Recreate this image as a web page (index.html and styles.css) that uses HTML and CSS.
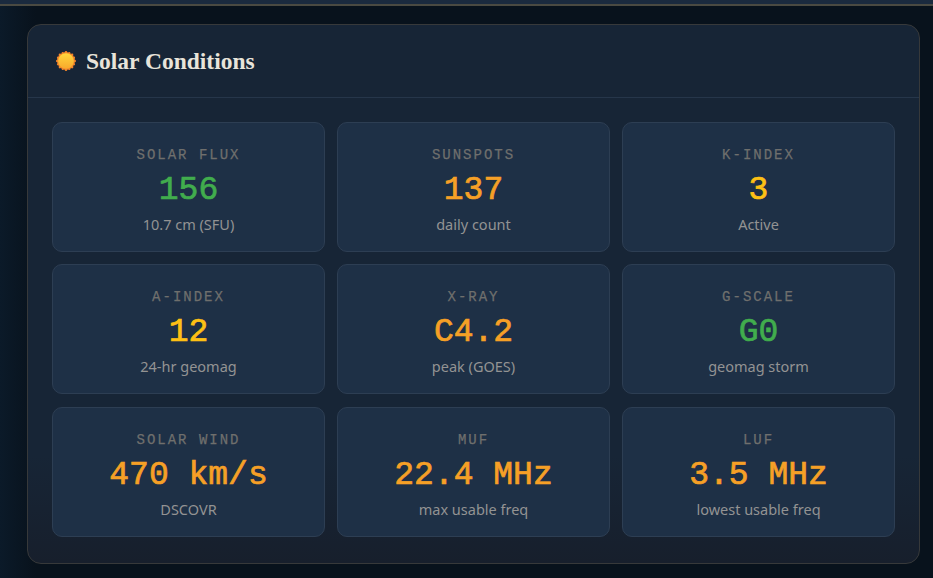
FILE: index.html
```html
<!DOCTYPE html>
<html lang="en">
<head>
<meta charset="utf-8">
<title>Solar Conditions</title>
<link rel="stylesheet" href="styles.css">
</head>
<body>
<div class="topbar"></div>
<main class="page">
  <section class="panel">
    <header class="panel-head">
      <svg class="sun" viewBox="0 0 20 20" width="20" height="20" aria-hidden="true">
        <defs>
          <linearGradient id="sunfill" x1="0" y1="0" x2="0" y2="1">
            <stop offset="0" stop-color="#ffd83c"/>
            <stop offset="1" stop-color="#f8a92c"/>
          </linearGradient>
        </defs>
        <g fill="#f4862a">
          <circle cx="10" cy="10" r="9"/>
          <circle cx="10" cy="1.3" r="1.3"/><circle cx="10" cy="18.7" r="1.3"/>
          <circle cx="1.3" cy="10" r="1.3"/><circle cx="18.7" cy="10" r="1.3"/>
          <circle cx="3.9" cy="3.9" r="1.3"/><circle cx="16.1" cy="3.9" r="1.3"/>
          <circle cx="3.9" cy="16.1" r="1.3"/><circle cx="16.1" cy="16.1" r="1.3"/>
          <circle cx="6.7" cy="2" r="1.1"/><circle cx="13.3" cy="2" r="1.1"/>
          <circle cx="6.7" cy="18" r="1.1"/><circle cx="13.3" cy="18" r="1.1"/>
          <circle cx="2" cy="6.7" r="1.1"/><circle cx="2" cy="13.3" r="1.1"/>
          <circle cx="18" cy="6.7" r="1.1"/><circle cx="18" cy="13.3" r="1.1"/>
        </g>
        <circle cx="10" cy="10" r="7.8" fill="url(#sunfill)"/>
      </svg>
      <h2 class="panel-title">Solar Conditions</h2>
    </header>
    <div class="grid">
      <div class="card"><div class="label">SOLAR FLUX</div><div class="value green">156</div><div class="sub">10.7 cm (SFU)</div></div>
      <div class="card"><div class="label">SUNSPOTS</div><div class="value orange">137</div><div class="sub">daily count</div></div>
      <div class="card"><div class="label">K-INDEX</div><div class="value yellow">3</div><div class="sub">Active</div></div>
      <div class="card"><div class="label">A-INDEX</div><div class="value yellow">12</div><div class="sub">24-hr geomag</div></div>
      <div class="card"><div class="label">X-RAY</div><div class="value orange">C4.2</div><div class="sub">peak (GOES)</div></div>
      <div class="card"><div class="label">G-SCALE</div><div class="value green">G0</div><div class="sub">geomag storm</div></div>
      <div class="card"><div class="label">SOLAR WIND</div><div class="value orange">470 km/s</div><div class="sub">DSCOVR</div></div>
      <div class="card"><div class="label">MUF</div><div class="value orange">22.4 MHz</div><div class="sub">max usable freq</div></div>
      <div class="card"><div class="label">LUF</div><div class="value orange">3.5 MHz</div><div class="sub">lowest usable freq</div></div>
    </div>
  </section>
</main>
</body>
</html>
```
FILE: styles.css
```css
* { box-sizing: border-box; }
html, body { margin: 0; height: 100%; }
body {
  background: linear-gradient(90deg, #0b1a29 0, #08121c 36px, #08121c 100%);
  overflow: hidden;
}
.topbar {
  height: 6px;
  background: #1a2a3e;
  border-bottom: 2px solid #4a4a42;
}
.page { padding: 18px 13px 0 27px; }
.panel {
  height: 540px;
  background: linear-gradient(180deg, #172536 0, #172536 80%, #171f2c 100%);
  border: 1px solid #37393a;
  border-radius: 14px;
}
.panel-head {
  height: 73px;
  padding: 0 0 0 28px;
  display: flex;
  align-items: center;
  gap: 10px;
  border-bottom: 1px solid #26364a;
}
.sun { flex: none; }
.panel-title {
  margin: 1px 0 0;
  font: 700 23.5px/1 "Liberation Serif", serif;
  color: #e8e4da;
}
.grid {
  padding: 24px 24px 0;
  display: grid;
  grid-template-columns: repeat(3, 1fr);
  grid-auto-rows: 130px;
  gap: 12.4px 12px;
}
.card {
  background: #1e3046;
  border: 1px solid #2d3e53;
  border-radius: 10px;
  display: flex;
  flex-direction: column;
  align-items: center;
  padding-top: 22px;
}
.label {
  font: 400 14px/20px "Liberation Mono", monospace;
  letter-spacing: 2px;
  color: #6f6f6d;
  -webkit-text-stroke: 0.25px #6f6f6d;
}
.value {
  font: 400 33px/38px "Liberation Mono", monospace;
  margin-top: 7px;
  -webkit-text-stroke: 0.7px currentColor;
}
.sub {
  font: 400 14.5px/20px "Noto Sans", sans-serif;
  color: #939393;
  margin-top: 4px;
}
.green { color: #41ad4d; }
.orange { color: #f6a026; }
.yellow { color: #fdc014; }
```
